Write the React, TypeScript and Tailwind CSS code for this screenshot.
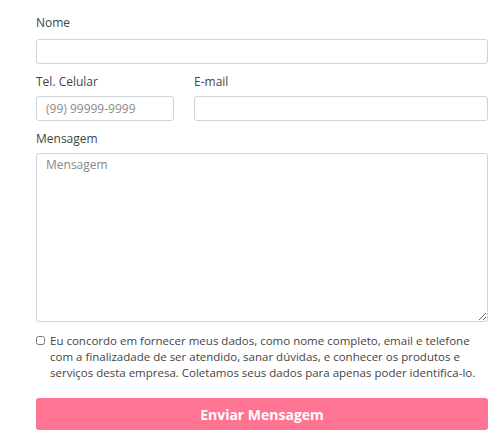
export default function App() {
  return (
    <div
      className="w-[503px] h-[447px] bg-white pl-[36px] pr-[15px] pt-[15px] text-[#444]"
      style={{ fontFamily: '"Open Sans", "Liberation Sans", sans-serif' }}
    >
      <form onSubmit={(e) => e.preventDefault()} className="flex flex-col">
        {/* Nome */}
        <label className="text-[12px] leading-[16px] text-[#444]">Nome</label>
        <input className="mt-[8px] h-[25px] w-full rounded-[3px] border border-[#ced4da] px-[9px] text-[12px] outline-none" />

        {/* Telefone / E-mail */}
        <div className="mt-[10px] flex gap-[20px]">
          <div className="flex w-[138px] flex-col">
            <label className="text-[12px] leading-[16px]">Tel. Celular</label>
            <input
              placeholder="(99) 99999-9999"
              className="mt-[6px] h-[25px] w-full rounded-[3px] border border-[#ced4da] px-[9px] text-[12px] outline-none placeholder:text-[#8a8a8a]"
            />
          </div>
          <div className="flex flex-1 flex-col">
            <label className="text-[12px] leading-[16px]">E-mail</label>
            <input className="mt-[6px] h-[25px] w-full rounded-[3px] border border-[#ced4da] px-[9px] text-[12px] outline-none" />
          </div>
        </div>

        {/* Mensagem */}
        <label className="mt-[10px] text-[12px] leading-[16px]">Mensagem</label>
        <textarea
          placeholder="Mensagem"
          className="mt-[6px] h-[169px] w-full resize-y rounded-[3px] border border-[#ced4da] px-[9px] py-[2px] text-[12px] outline-none placeholder:text-[#8a8a8a]"
        />

        {/* Consentimento */}
        <label className="mt-[11px] flex items-start gap-[5px] text-[11.5px] leading-[16px] text-[#444]">
          <input type="checkbox" className="mt-[3px] h-[9px] w-[9px] shrink-0" />
          <span className="w-[440px]">
            Eu concordo em fornecer meus dados, como nome completo, email e telefone com a finalizadade de ser
            atendido, sanar dúvidas, e conhecer os produtos e serviços desta empresa. Coletamos seus dados para
            apenas poder identifica-lo.
          </span>
        </label>

        <button
          type="submit"
          className="mt-[17px] h-[32px] w-full rounded-[3px] bg-[#ff7393] text-[14px] font-bold text-white"
        >
          Enviar Mensagem
        </button>
      </form>
    </div>
  );
}
